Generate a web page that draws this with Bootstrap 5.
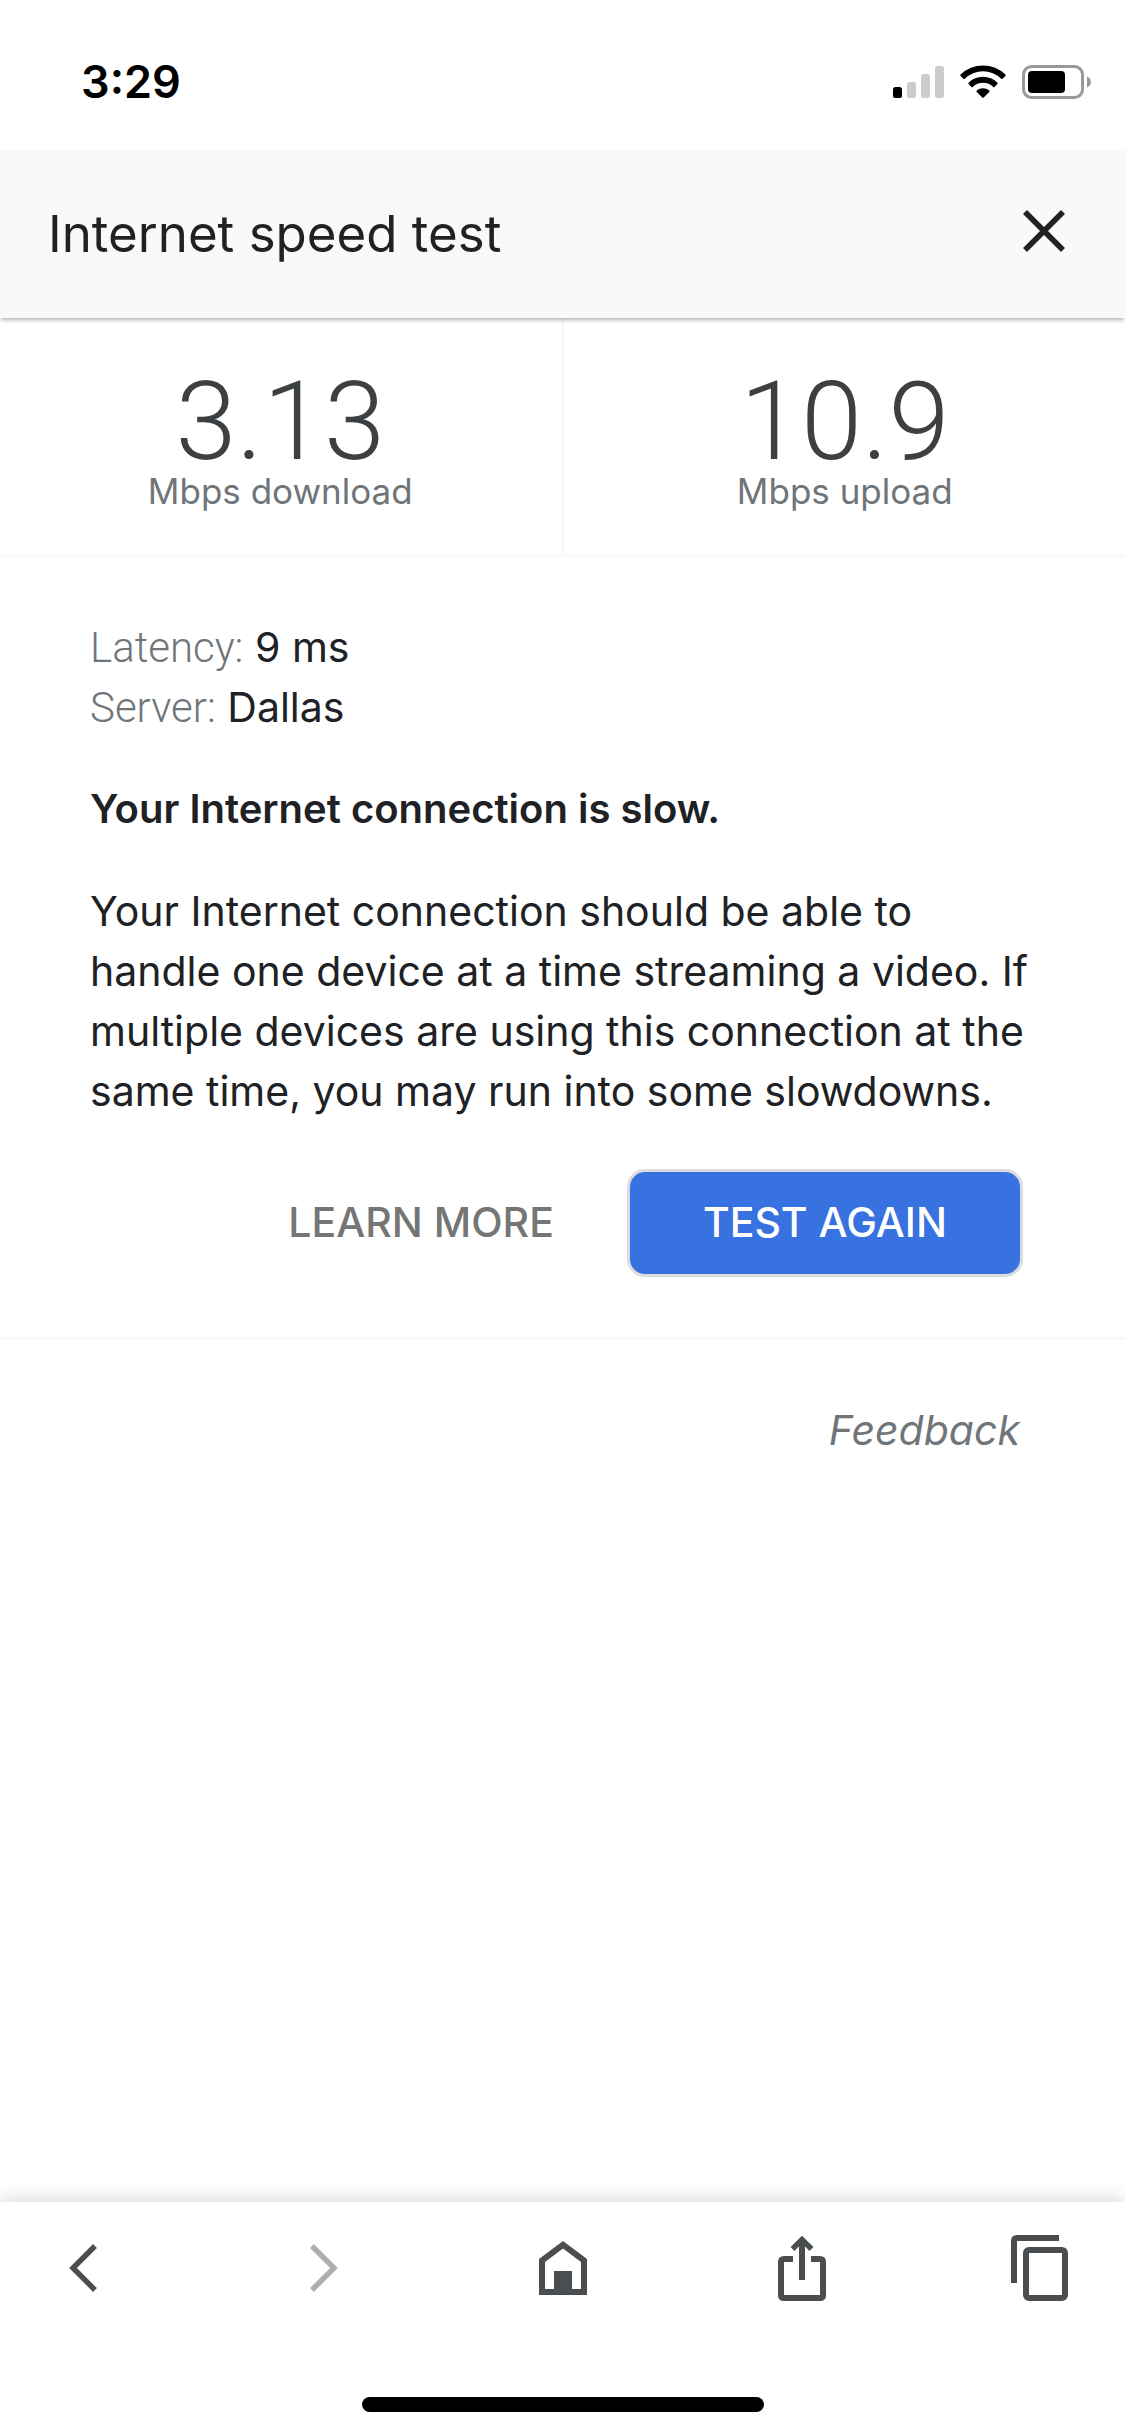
<!DOCTYPE html>
<html lang="en">
<head>
<meta charset="utf-8">
<meta name="viewport" content="width=device-width, initial-scale=1">
<title>Internet speed test</title>
<link href="https://cdn.jsdelivr.net/npm/bootstrap@5.3.0/dist/css/bootstrap.min.css" rel="stylesheet">
<style>
  :root { --ink: #202124; --soft: #70757a; --rule: #f8f9fa; --tool: #4a4e51; }
  body { font-family: Inter, "Liberation Sans", sans-serif; font-size: 41px; line-height: 60px; color: var(--ink); background: #fff; }
  svg { display: block; }
  .status-bar { height: 150px; padding: 14px 33px 0 81px; }
  .clock { font-size: 45px; font-weight: 600; color: #000; }
  .panel-head { height: 168px; padding: 0 45px 0 48px; background: #f8faf9; box-shadow: 0 3px 4px -1px rgba(0,0,0,.3); position: relative; z-index: 1; }
  .panel-title { font-size: 51px; font-weight: 400; line-height: 60px; }
  .icon-btn { width: 72px; height: 72px; color: var(--tool); }
  .close-btn { color: var(--ink); }
  .icon-btn:disabled { opacity: .45; border: 0; color: var(--tool); }
  .stats { border-bottom: 3px solid var(--rule); }
  .stat { padding: 58px 0 39px; }
  .stat + .stat { border-left: 4px solid var(--rule); }
  .stat-value { font-family: Roboto, "Liberation Sans", sans-serif; font-size: 110px; font-weight: 300; line-height: 91px; color: #3c4043; }
  .stat-unit { font-size: 35px; line-height: 48px; color: var(--soft); }
  .details { padding: 60px 90px; border-bottom: 3px solid var(--rule); }
  .term { font-family: Roboto, "Liberation Sans", sans-serif; font-size: 42px; font-weight: 300; line-height: 1; color: var(--soft); }
  .verdict { font-size: 40px; font-weight: 600; line-height: 60px; margin: 42px 0; }
  .actions { margin-top: 48px; padding-right: 12px; }
  .btn-flat, .btn-again { height: 108px; font-size: 41px; font-weight: 500; border-radius: 18px; padding: 0 73px; }
  .btn-flat { color: #757575; }
  .btn-again { color: #fff; background: #3871e0; border: 3px solid #dadce0; }
  .feedback { padding: 60px 105px; font-style: italic; }
  .feedback a { color: var(--soft); text-decoration: none; }
  .toolbar { padding: 30px 48px 0; height: 234px; background: #fff; box-shadow: 0 0 21px rgba(0,0,0,.2); }
  .home-bar { width: 402px; height: 15px; border-radius: 8px; background: #000; margin-bottom: 24px; }
</style>
<script src="https://cdn.jsdelivr.net/npm/bootstrap@5.3.0/dist/js/bootstrap.bundle.min.js"></script>
</head>
<body class="d-flex flex-column min-vh-100">
<div class="status-bar d-flex justify-content-between align-items-center">
  <span class="clock">3:29</span>
  <svg width="200" height="36" viewBox="892 64 200 36" aria-hidden="true">
    <rect x="893" y="87" width="9" height="11" rx="2.5"/>
    <g fill="#cbcbcb"><rect x="907" y="82" width="9" height="16" rx="2.5"/><rect x="921" y="74" width="9" height="24" rx="2.5"/><rect x="935" y="66" width="9" height="32" rx="2.5"/></g>
    <path d="M960.6 74.6a32 32 0 0 1 44.800 0c.4.4.4 1 0 1.400l-2.800 2.800c-.4.4-1 .4-1.400 0a26 26 0 0 0-36.400 0c-.4.4-1 .4-1.400 0l-2.800-2.800c-.4-.4-.4-1 0-1.400z"/>
    <path d="M968.600 82.700a20.500 20.500 0 0 1 28.800 0c.4.400.4 1 0 1.400l-2.900 2.800c-.4.400-1 .4-1.300 0a14.800 14.800 0 0 0-20.400 0c-.4.400-1 .4-1.300 0l-2.900-2.800c-.4-.4-.4-1 0-1.400z"/>
    <path d="M976.700 90.600a9.400 9.400 0 0 1 12.600 0c.4.400.4 1 0 1.400l-5.600 5.600c-.4.400-1 .4-1.400 0l-5.600-5.600c-.4-.4-.4-1 0-1.400z"/>
    <rect x="1023.500" y="66.500" width="59" height="31" rx="8" fill="none" stroke="#999" stroke-width="3"/>
    <rect x="1028" y="71" width="37" height="22" rx="4"/>
    <path d="M1087 76.500c5.300 2 5.300 9 0 11z" fill="#999"/>
  </svg>
</div>
<header class="panel-head d-flex justify-content-between align-items-center">
  <h1 class="panel-title m-0">Internet speed test</h1>
  <button type="button" class="btn icon-btn close-btn p-0 border-0" aria-label="Close">
    <svg width="72" height="72" viewBox="0 0 72 72" fill="none" stroke="currentColor" stroke-width="5.600"><path d="M17 14 55 52M55 14 17 52"/></svg>
  </button>
</header>
<main class="flex-grow-1">
  <section class="stats row g-0 text-center">
    <div class="stat col"><div class="stat-value">3.13</div><div class="stat-unit">Mbps download</div></div>
    <div class="stat col"><div class="stat-value">10.9</div><div class="stat-unit">Mbps upload</div></div>
  </section>
  <section class="details">
    <div><span class="term">Latency:</span> 9 ms</div>
    <div><span class="term">Server:</span> Dallas</div>
    <h2 class="verdict">Your Internet connection is slow.</h2>
    <p class="m-0">Your Internet connection should be able to handle one device at a time streaming a video. If multiple devices are using this connection at the same time, you may run into some slowdowns.</p>
    <div class="actions d-flex justify-content-end">
      <button type="button" class="btn btn-flat border-0">LEARN MORE</button>
      <button type="button" class="btn btn-again">TEST AGAIN</button>
    </div>
  </section>
  <div class="feedback text-end"><a href="#">Feedback</a></div>
</main>
<footer class="toolbar d-flex flex-column justify-content-between">
  <nav class="d-flex justify-content-between" aria-label="Browser">
    <button type="button" class="btn icon-btn p-0 border-0" aria-label="Back"><svg width="72" height="72" viewBox="0 0 72 72" fill="none" stroke="currentColor" stroke-width="5.400"><path d="M47 14 25 36 47 58"/></svg></button>
    <button type="button" class="btn icon-btn p-0 border-0" aria-label="Forward" disabled><svg width="72" height="72" viewBox="0 0 72 72" fill="none" stroke="currentColor" stroke-width="5.400"><path d="M25 14 47 36 25 58"/></svg></button>
    <button type="button" class="btn icon-btn p-0 border-0" aria-label="Home"><svg width="72" height="72" viewBox="0 0 72 72" fill="currentColor"><path fill-rule="evenodd" d="M36 9 60 27V63H12V27zM36 16.500 18 30V57h9V39H45V57h9V30z"/></svg></button>
    <button type="button" class="btn icon-btn p-0 border-0" aria-label="Share"><svg width="72" height="72" viewBox="0 0 72 72" fill="none" stroke="currentColor" stroke-width="6"><path d="M27 27H18Q15 27 15 30V63Q15 66 18 66H54Q57 66 57 63V30Q57 27 54 27H45M36 48V8"/><path d="M26.500 17 36 7.500 45.500 17" stroke-width="5.400"/></svg></button>
    <button type="button" class="btn icon-btn p-0 border-0" aria-label="Tabs"><svg width="72" height="72" viewBox="0 0 72 72" fill="none" stroke="currentColor" stroke-width="6"><path d="M9 51V9Q9 6 12 6H54"/><rect x="21" y="18" width="39" height="48" rx="3"/></svg></button>
  </nav>
  <div class="home-bar align-self-center"></div>
</footer>
</body>
</html>
